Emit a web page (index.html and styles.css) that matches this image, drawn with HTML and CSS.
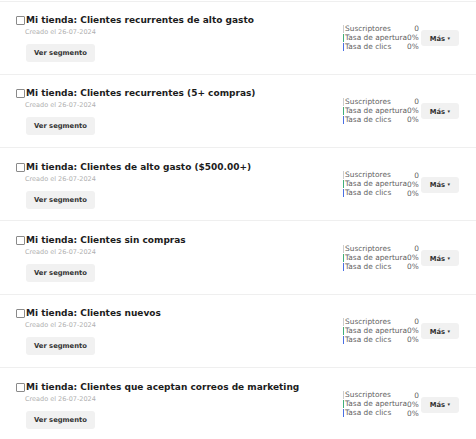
FILE: index.html
```html
<!DOCTYPE html>
<html lang="es">
<head>
    <meta charset="UTF-8">
    <meta name="viewport" content="width=device-width, initial-scale=1.0">
    <title>Segmentos</title>
    <link rel="stylesheet" href="styles.css">
</head>
<body>
    <div class="segment-list">
        <div class="segment">
            <div class="segment-info">
                <h3 class="segment-title"><span class="check"></span>Mi tienda: Clientes recurrentes de alto gasto</h3>
                <div class="segment-date">Creado el 26-07-2024</div>
                <button class="btn">Ver segmento</button>
            </div>
            <div class="stats">
                <span class="label subs">Suscriptores</span><span class="value">0</span>
                <span class="label open">Tasa de apertura</span><span class="value">0%</span>
                <span class="label click">Tasa de clics</span><span class="value">0%</span>
            </div>
            <button class="btn more">Más <span class="caret">▾</span></button>
        </div>

        <div class="segment">
            <div class="segment-info">
                <h3 class="segment-title"><span class="check"></span>Mi tienda: Clientes recurrentes (5+ compras)</h3>
                <div class="segment-date">Creado el 26-07-2024</div>
                <button class="btn">Ver segmento</button>
            </div>
            <div class="stats">
                <span class="label subs">Suscriptores</span><span class="value">0</span>
                <span class="label open">Tasa de apertura</span><span class="value">0%</span>
                <span class="label click">Tasa de clics</span><span class="value">0%</span>
            </div>
            <button class="btn more">Más <span class="caret">▾</span></button>
        </div>

        <div class="segment">
            <div class="segment-info">
                <h3 class="segment-title"><span class="check"></span>Mi tienda: Clientes de alto gasto ($500.00+)</h3>
                <div class="segment-date">Creado el 26-07-2024</div>
                <button class="btn">Ver segmento</button>
            </div>
            <div class="stats">
                <span class="label subs">Suscriptores</span><span class="value">0</span>
                <span class="label open">Tasa de apertura</span><span class="value">0%</span>
                <span class="label click">Tasa de clics</span><span class="value">0%</span>
            </div>
            <button class="btn more">Más <span class="caret">▾</span></button>
        </div>

        <div class="segment">
            <div class="segment-info">
                <h3 class="segment-title"><span class="check"></span>Mi tienda: Clientes sin compras</h3>
                <div class="segment-date">Creado el 26-07-2024</div>
                <button class="btn">Ver segmento</button>
            </div>
            <div class="stats">
                <span class="label subs">Suscriptores</span><span class="value">0</span>
                <span class="label open">Tasa de apertura</span><span class="value">0%</span>
                <span class="label click">Tasa de clics</span><span class="value">0%</span>
            </div>
            <button class="btn more">Más <span class="caret">▾</span></button>
        </div>

        <div class="segment">
            <div class="segment-info">
                <h3 class="segment-title"><span class="check"></span>Mi tienda: Clientes nuevos</h3>
                <div class="segment-date">Creado el 26-07-2024</div>
                <button class="btn">Ver segmento</button>
            </div>
            <div class="stats">
                <span class="label subs">Suscriptores</span><span class="value">0</span>
                <span class="label open">Tasa de apertura</span><span class="value">0%</span>
                <span class="label click">Tasa de clics</span><span class="value">0%</span>
            </div>
            <button class="btn more">Más <span class="caret">▾</span></button>
        </div>

        <div class="segment">
            <div class="segment-info">
                <h3 class="segment-title"><span class="check"></span>Mi tienda: Clientes que aceptan correos de marketing</h3>
                <div class="segment-date">Creado el 26-07-2024</div>
                <button class="btn">Ver segmento</button>
            </div>
            <div class="stats">
                <span class="label subs">Suscriptores</span><span class="value">0</span>
                <span class="label open">Tasa de apertura</span><span class="value">0%</span>
                <span class="label click">Tasa de clics</span><span class="value">0%</span>
            </div>
            <button class="btn more">Más <span class="caret">▾</span></button>
        </div>
    </div>
</body>
</html>
```

FILE: styles.css
```css
body {
    margin: 0;
    font-family: 'DejaVu Sans', sans-serif;
    background-color: #fff;
    color: #222;
}
.segment-list {
    padding-top: 0.5px;
}
.segment {
    display: flex;
    align-items: center;
    height: 72.33px;
    padding: 0 17px 0 16px;
    border-top: 1px solid #efefef;
}
.segment-info {
    flex: 1;
    display: flex;
    flex-direction: column;
    align-items: flex-start;
    padding-top: 2px;
}
.segment-title {
    margin: 0;
    font-size: 9px;
    line-height: 11px;
    font-weight: bold;
    color: #1c1c1c;
    display: flex;
    align-items: center;
}
.check {
    display: inline-block;
    width: 7px;
    height: 7px;
    border: 1px solid #8a8a8a;
    border-radius: 1px;
    margin-right: 1px;
    background: #fff;
}
.segment-date {
    margin: 2px 0 0 9px;
    font-size: 6.5px;
    line-height: 9px;
    color: #b0b0b0;
}
.btn {
    font-family: 'DejaVu Sans', sans-serif;
    font-size: 6.75px;
    line-height: 8px;
    font-weight: bold;
    color: #333;
    background-color: #f1f1f1;
    border: none;
    border-radius: 3px;
    padding: 5px 8px;
    cursor: pointer;
}
.segment-info .btn {
    margin: 7px 0 0 10px;
}
.stats {
    display: grid;
    grid-template-columns: auto auto;
    font-size: 7.4px;
    line-height: 9px;
    color: #5f5f5f;
    margin-right: 2px;
}
.label {
    border-left: 1px solid #ccc;
    padding-left: 1px;
    line-height: 8px;
    margin: 0.5px 0;
}
.label.open {
    border-left-color: #3fae7a;
}
.label.click {
    border-left-color: #4a6fe3;
}
.value {
    text-align: right;
}
.more {
    padding: 3.5px 9px;
    margin-top: 1px;
}
.caret {
    font-size: 5px;
    vertical-align: 1px;
}
```
